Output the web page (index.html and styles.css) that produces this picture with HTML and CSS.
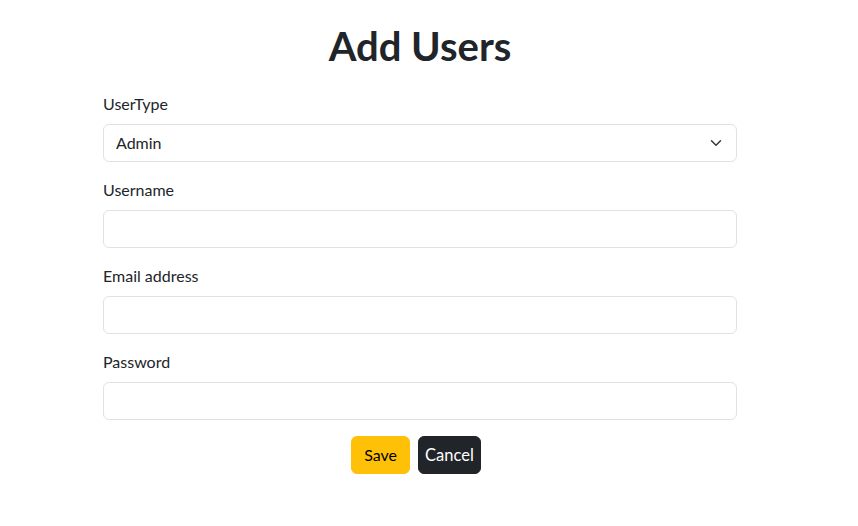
FILE: index.html
```html
<!DOCTYPE html>
<html lang="en">
<head>
<meta charset="utf-8">
<title>Add Users</title>
<link rel="stylesheet" href="styles.css">
</head>
<body>
<div class="page">
  <h1 class="title">Add Users</h1>
  <form class="form">
    <div class="group">
      <label class="label" for="usertype">UserType</label>
      <div class="select-wrap">
        <select id="usertype" class="control select">
          <option>Admin</option>
          <option>User</option>
        </select>
        <svg class="chevron" width="12" height="12" viewBox="0 0 16 16" aria-hidden="true"><path d="M2 5l6 6 6-6" fill="none" stroke="#343a40" stroke-width="2" stroke-linecap="round" stroke-linejoin="round"/></svg>
      </div>
    </div>
    <div class="group">
      <label class="label" for="username">Username</label>
      <input id="username" class="control" type="text">
    </div>
    <div class="group">
      <label class="label" for="email">Email address</label>
      <input id="email" class="control" type="email">
    </div>
    <div class="group">
      <label class="label" for="password">Password</label>
      <input id="password" class="control" type="password">
    </div>
    <div class="actions">
      <button type="submit" class="btn btn-save">Save</button>
      <button type="button" class="btn btn-cancel">Cancel</button>
    </div>
  </form>
</div>
</body>
</html>
```
FILE: styles.css
```css
* { box-sizing: border-box; }
html, body { margin: 0; padding: 0; background: #fff; }
body {
  font-family: Lato, "Noto Sans", "Liberation Sans", sans-serif;
  color: #212529;
  font-size: 16px;
  line-height: 1.5;
}
.page {
  width: 840px;
  padding-top: 23px;
}
.title {
  margin: 0 0 22px;
  text-align: center;
  font-size: 40px;
  font-weight: 700;
  line-height: 47px;
  color: #212529;
}
.form {
  width: 634px;
  margin: 0 auto;
}
.group { margin-bottom: 16px; }
.label {
  display: block;
  margin-bottom: 8px;
  line-height: 24px;
}
.control {
  display: block;
  width: 100%;
  height: 38px;
  padding: 6px 12px;
  font: inherit;
  color: #212529;
  background: #fff;
  border: 1px solid #dee2e6;
  border-radius: 6px;
  outline: none;
}
.select-wrap { position: relative; }
.select {
  appearance: none;
  -webkit-appearance: none;
  padding-right: 36px;
}
.chevron {
  position: absolute;
  right: 15px;
  top: 13px;
  width: 12px;
  height: 12px;
  pointer-events: none;
}
.actions {
  display: flex;
  justify-content: center;
  gap: 8px;
  padding-right: 8px;
}
.btn {
  height: 38px;
  border: 1px solid transparent;
  border-radius: 6px;
  font-family: inherit;
  line-height: 24px;
  cursor: pointer;
}
.btn-save {
  padding: 6px 12px;
  font-size: 16px;
  background: #ffc107;
  border-color: #ffc107;
  color: #000;
}
.btn-cancel {
  padding: 6px 6px;
  font-size: 16.5px;
  background: #212529;
  border-color: #212529;
  color: #fff;
}
```
